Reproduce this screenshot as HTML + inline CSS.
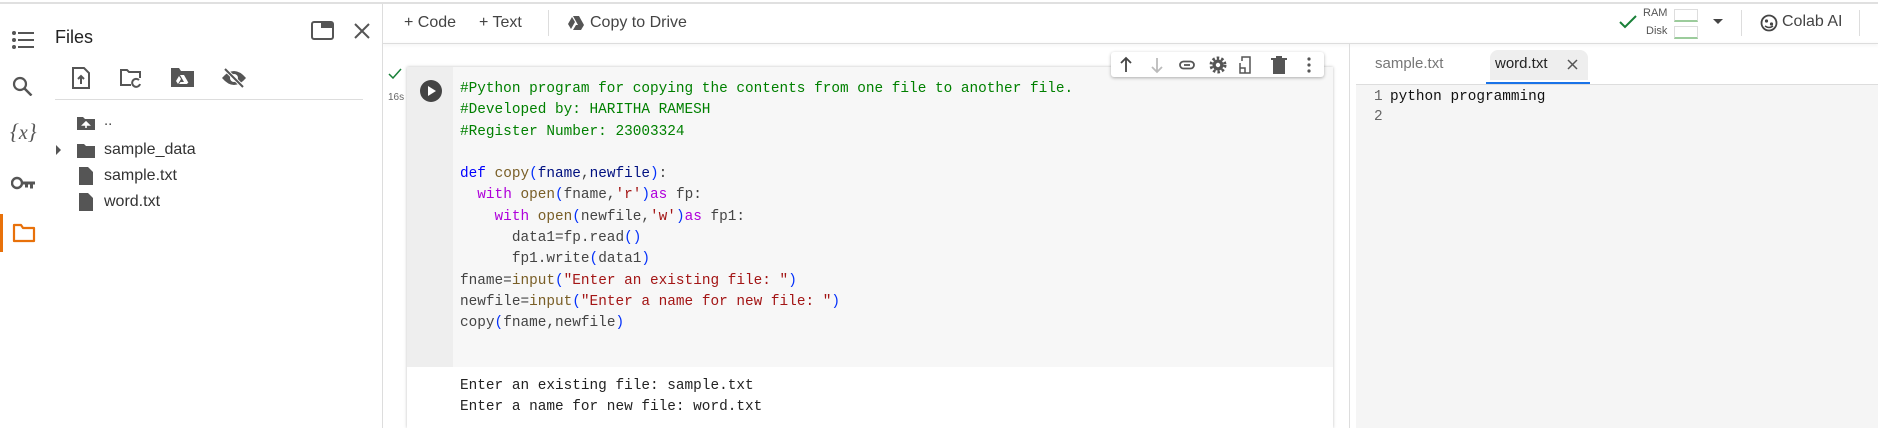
<!DOCTYPE html>
<html><head><meta charset="utf-8"><style>
*{margin:0;padding:0;box-sizing:border-box}
body{width:1878px;height:428px;overflow:hidden;background:#fff;font-family:"Liberation Sans",sans-serif;color:#444;position:relative}
.a{position:absolute}
.mono{font-family:"Liberation Mono",monospace;font-size:14.4px;white-space:pre}
.c{color:#008000}.k{color:#0000ff}.f{color:#795e26}.p{color:#af00db}.s{color:#a31515}.b{color:#0431fa}.d{color:#222}
svg{position:absolute}
</style></head><body>
<div class="a" style="left:0;top:2px;width:1878px;height:2px;background:#e0e0e0"></div>
<!-- toolbar -->
<div class="a" style="left:383px;top:43px;width:1495px;height:1px;background:#ddd;box-shadow:0 1px 3px rgba(0,0,0,.12)"></div>
<div class="a" style="left:404px;top:14px;font-size:16px;color:#444">+ Code</div>
<div class="a" style="left:479px;top:14px;font-size:16px;color:#444">+ Text</div>
<div class="a" style="left:548px;top:10px;width:1px;height:26px;background:#ddd"></div>
<svg style="left:568px;top:16px" width="16" height="14" viewBox="0 0 16 14"><path d="M5 0h6l5 9h-6zM4 1l3 5-4 7-3-5zM5 14l3-5h8l-3 5z" fill="#555"/></svg>
<div class="a" style="left:590px;top:14px;font-size:16px;color:#444">Copy to Drive</div>
<svg style="left:1619px;top:14px" width="18" height="16"><path d="M1 8l5 5L17 2" stroke="#188038" stroke-width="2" fill="none"/></svg>
<div class="a" style="left:1643px;top:7px;font-size:11px;color:#555">RAM</div>
<div class="a" style="left:1646px;top:25px;font-size:11px;color:#555">Disk</div>
<div class="a" style="left:1674px;top:9px;width:24px;height:13px;border:1px solid #ddd;border-bottom:2px solid #9ccc9c"></div>
<div class="a" style="left:1674px;top:26px;width:24px;height:13px;border:1px solid #ddd;border-bottom:2px solid #9ccc9c"></div>
<svg style="left:1713px;top:19px" width="10" height="6"><path d="M0 0h10L5 5z" fill="#444"/></svg>
<div class="a" style="left:1741px;top:10px;width:1px;height:26px;background:#ddd"></div>
<svg style="left:1760px;top:14px" width="18" height="18" viewBox="0 0 18 18"><circle cx="9" cy="9" r="7.5" stroke="#444" stroke-width="1.8" fill="none"/><circle cx="6.5" cy="7" r="1.6" fill="#444"/><circle cx="11.5" cy="10" r="1.6" fill="#444"/><path d="M5 12q4 3 8 0" stroke="#444" stroke-width="1.5" fill="none"/></svg>
<div class="a" style="left:1782px;top:13px;font-size:16px;color:#444">Colab AI</div>
<div class="a" style="left:1859px;top:10px;width:1px;height:26px;background:#ddd"></div>
<!-- left rail -->
<svg style="left:12px;top:31px" width="22" height="18"><g fill="#555"><circle cx="2" cy="2" r="2"/><circle cx="2" cy="9" r="2"/><circle cx="2" cy="16" r="2"/><rect x="6" y="1" width="16" height="2"/><rect x="6" y="8" width="16" height="2"/><rect x="6" y="15" width="16" height="2"/></g></svg>
<svg style="left:12px;top:76px" width="22" height="20"><circle cx="8" cy="8" r="6" stroke="#555" stroke-width="2.2" fill="none"/><path d="M12.5 12.5l7 7" stroke="#555" stroke-width="2.5"/></svg>
<div class="a" style="left:10px;top:119px;font-family:'Liberation Serif',serif;font-style:italic;font-size:22px;color:#555">{<span style="font-size:20px">x</span>}</div>
<svg style="left:11px;top:176px" width="25" height="14"><circle cx="6" cy="7" r="5" stroke="#555" stroke-width="2.4" fill="none"/><path d="M11 5.5h13v3h-2v4h-3v-4h-2v3h-3v-3h-3z" fill="#555"/></svg>
<div class="a" style="left:0;top:214px;width:3px;height:38px;background:#e8710a"></div>
<svg style="left:12px;top:223px" width="24" height="20"><path d="M2 2h7l2 3h11v13H2z" stroke="#e8710a" stroke-width="2.2" fill="none" stroke-linejoin="round"/></svg>
<!-- files panel -->
<div class="a" style="left:55px;top:27px;font-size:18px;color:#222">Files</div>
<svg style="left:311px;top:21px" width="23" height="19"><rect x="1" y="1" width="21" height="17" rx="2" stroke="#555" stroke-width="2" fill="none"/><rect x="10" y="1" width="12" height="6" fill="#555"/></svg>
<svg style="left:354px;top:23px" width="16" height="16"><path d="M1 1l14 14M15 1L1 15" stroke="#555" stroke-width="2"/></svg>
<svg style="left:71px;top:67px" width="20" height="22"><path d="M2 1h11l5 5v15H2z" stroke="#555" stroke-width="2" fill="none"/><path d="M10 17V10M7 12l3-3 3 3" stroke="#555" stroke-width="2" fill="none"/></svg>
<svg style="left:119px;top:68px" width="24" height="20"><path d="M12 17H2V2h6l2 2h11v6" stroke="#555" stroke-width="2" fill="none"/><path d="M21 16a4 4 0 1 1-1-4" stroke="#555" stroke-width="2" fill="none"/></svg>
<svg style="left:171px;top:68px" width="23" height="19"><path d="M0 0h8l2 3h13v16H0z" fill="#555"/><path d="M9 7h4l4 7h-4zM8 8l2 3-3 5-2-3zM8 16l1.5-2h8l-1.5 2z" fill="#fff"/></svg>
<svg style="left:221px;top:67px" width="26" height="22"><path d="M1 11q12-14 24 0q-12 14-24 0z" fill="#555"/><circle cx="13" cy="11" r="4" fill="#fff"/><path d="M4 2l18 18" stroke="#fff" stroke-width="4"/><path d="M4 2l18 18" stroke="#555" stroke-width="2"/></svg>
<div class="a" style="left:55px;top:99px;width:308px;height:1px;background:#ddd"></div>
<svg style="left:77px;top:116px" width="18" height="14"><path d="M0 1h6l2 2h10v11H0z" fill="#555"/><path d="M9 12V7M6 9l3-3 3 3z" stroke="#fff" stroke-width="1.6" fill="#fff"/></svg>
<div class="a" style="left:104px;top:112px;font-size:15px;color:#444">..</div>
<svg style="left:56px;top:145px" width="6" height="10"><path d="M0 0l5 5-5 5z" fill="#555"/></svg>
<svg style="left:77px;top:143px" width="18" height="15"><path d="M0 1h7l2 2h9v12H0z" fill="#555"/></svg>
<div class="a" style="left:104px;top:141px;font-size:16px;color:#333">sample_data</div>
<svg style="left:79px;top:167px" width="14" height="18"><path d="M0 0h9l5 5v13H0z" fill="#555"/></svg>
<div class="a" style="left:104px;top:167px;font-size:16px;color:#333">sample.txt</div>
<svg style="left:79px;top:193px" width="14" height="18"><path d="M0 0h9l5 5v13H0z" fill="#555"/></svg>
<div class="a" style="left:104px;top:193px;font-size:16px;color:#333">word.txt</div>
<div class="a" style="left:382px;top:4px;width:1px;height:424px;background:#ddd"></div>
<!-- cell -->
<svg style="left:388px;top:68px" width="14" height="11"><path d="M1 6l4 4 8-9" stroke="#188038" stroke-width="1.5" fill="none"/></svg>
<div class="a" style="left:388px;top:92px;font-size:10px;color:#666">16s</div>
<div class="a" style="left:407px;top:67px;width:926px;height:361px;background:#fff;box-shadow:0 0 3px rgba(0,0,0,.25)"></div>
<div class="a" style="left:407px;top:67px;width:46px;height:300px;background:#eeeeee"></div>
<div class="a" style="left:453px;top:67px;width:880px;height:300px;background:#f7f7f7"></div>
<svg style="left:420px;top:80px" width="22" height="22"><circle cx="11" cy="11" r="11" fill="#444"/><path d="M8 6l8 5-8 5z" fill="#fff"/></svg>
<div class="a mono" style="left:460px;top:79px;line-height:21.3px"><span class="c">#Python program for copying the contents from one file to another file.
#Developed by: HARITHA RAMESH
#Register Number: 23003324</span>

<span class="k">def</span> <span class="f">copy</span><span class="b">(</span><span style="color:#001080">fname</span>,<span style="color:#001080">newfile</span><span class="b">)</span>:
  <span class="p">with</span> <span class="f">open</span><span class="b">(</span>fname,<span class="s">'r'</span><span class="b">)</span><span class="p">as</span> fp:
    <span class="p">with</span> <span class="f">open</span><span class="b">(</span>newfile,<span class="s">'w'</span><span class="b">)</span><span class="p">as</span> fp1:
      data1=fp.read<span class="b">()</span>
      fp1.write<span class="b">(</span>data1<span class="b">)</span>
fname=<span class="f">input</span><span class="b">(</span><span class="s">"Enter an existing file: "</span><span class="b">)</span>
newfile=<span class="f">input</span><span class="b">(</span><span class="s">"Enter a name for new file: "</span><span class="b">)</span>
copy<span class="b">(</span>fname,newfile<span class="b">)</span></div>
<div class="a mono d" style="left:460px;top:376px;line-height:20.5px">Enter an existing file: sample.txt
Enter a name for new file: word.txt</div>
<!-- cell toolbar -->
<div class="a" style="left:1111px;top:52px;width:213px;height:25px;background:#fff;border-radius:3px;box-shadow:0 1px 3px rgba(0,0,0,.3)"></div>
<svg style="left:1119px;top:56px" width="200" height="18" viewBox="0 0 200 18">
<path d="M7 16V2M2 7l5-5 5 5" stroke="#444" stroke-width="1.8" fill="none"/>
<path d="M38 2v14M33 11l5 5 5-5" stroke="#bbb" stroke-width="1.8" fill="none"/>
<rect x="61" y="5.5" width="14" height="7" rx="3.5" stroke="#555" stroke-width="1.8" fill="none"/><path d="M65 9h6" stroke="#555" stroke-width="1.8"/>
<circle cx="99" cy="9" r="5.5" fill="#555"/><circle cx="99" cy="9" r="7" stroke="#555" stroke-width="3" stroke-dasharray="2.5 2" fill="none"/><circle cx="99" cy="9" r="2.2" fill="#fff"/>
<path d="M123 5V1h8v16h-10V7" stroke="#555" stroke-width="1.5" fill="none"/><path d="M121 12h5v5" stroke="#555" stroke-width="1.5" fill="none"/>
<path d="M154 4h12v14h-12zM152 2h16v2h-16zM157 0h6v2h-6z" fill="#555"/>
<circle cx="190" cy="3" r="1.6" fill="#555"/><circle cx="190" cy="9" r="1.6" fill="#555"/><circle cx="190" cy="15" r="1.6" fill="#555"/>
</svg>
<!-- right panel -->
<div class="a" style="left:1349px;top:44px;width:1px;height:384px;background:#ddd"></div>
<div class="a" style="left:1375px;top:55px;font-size:15px;color:#777">sample.txt</div>
<div class="a" style="left:1490px;top:50px;width:98px;height:30px;background:#eee;border-radius:8px 8px 0 0"></div>
<div class="a" style="left:1495px;top:55px;font-size:15px;color:#222">word.txt</div>
<svg style="left:1567px;top:59px" width="11" height="11"><path d="M1 1l9 9M10 1l-9 9" stroke="#555" stroke-width="1.5"/></svg>
<div class="a" style="left:1486px;top:82px;width:104px;height:2px;background:#1a73e8"></div>
<div class="a" style="left:1356px;top:84px;width:522px;height:1px;background:#ddd"></div>
<div class="a" style="left:1356px;top:85px;width:522px;height:343px;background:#f5f5f5"></div>
<div class="a mono" style="left:1374px;top:87px;line-height:20px;color:#666">1
2</div>
<div class="a mono" style="left:1390px;top:87px;line-height:20px;color:#111">python programming</div>
</body></html>
